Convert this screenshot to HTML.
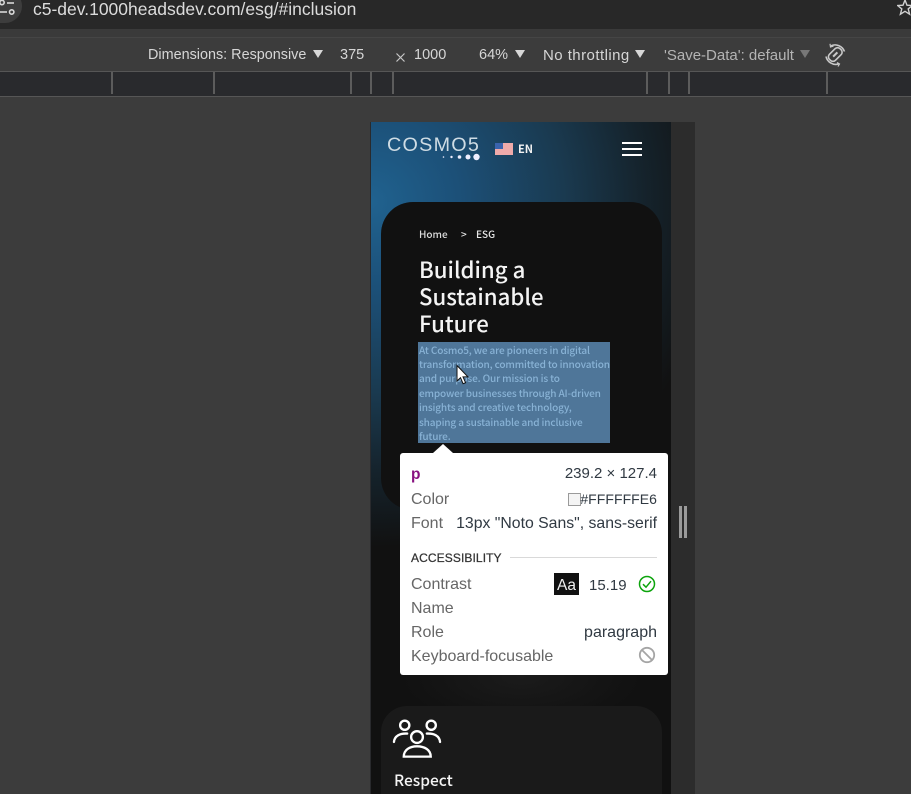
<!DOCTYPE html>
<html><head><meta charset="utf-8"><style>
html,body{margin:0;padding:0;background:#3c3c3c}
#r{position:relative;width:911px;height:794px;overflow:hidden;background:#3c3c3c;font-family:"Liberation Sans",sans-serif}
#r div,#r span.a,#r svg{position:absolute}
.t{white-space:nowrap;line-height:1}
.dt{color:#d6d6d6;font-size:15px;top:47px}
.tri{width:0;height:0;border-left:5px solid transparent;border-right:5px solid transparent;border-top:8px solid #d8d8d8;top:50px}
.tk{width:2px;height:22px;top:72px;background:#5c5c5c}
.n{font-family:"Noto Sans CJK SC","Liberation Sans",sans-serif}
.lb{color:#666;font-size:16px}
.val{color:#303942;font-size:15px}
</style></head><body><div id="r">
<div style="left:0;top:0;width:911px;height:29px;background:#282828"></div>
<div style="left:0;top:29px;width:911px;height:8px;background:#3a3a3a"></div>
<div style="left:0;top:37px;width:911px;height:1px;background:#454545"></div>
<div style="left:-22px;top:-11px;width:44px;height:34px;border-radius:17px;background:#3d3d3d"></div>
<svg style="left:0;top:0" width="16" height="16" viewBox="0 0 16 16" fill="none" stroke="#d8d8d8" stroke-width="1.6"><circle cx="2" cy="2.500" r="2.200"/><path d="M7 3H14"/><path d="M0 12H7"/><circle cx="11.700" cy="12" r="2.200"/></svg>
<div class="t" style="left:33px;top:0;color:#dcdcdc;font-size:17.500px;line-height:18px">c5-dev.1000headsdev.com/esg/#inclusion</div>
<svg style="left:897px;top:-2px" width="16" height="18" viewBox="0 0 16 18" fill="none" stroke="#d0d0d0" stroke-width="1.400"><path d="M8 2l2 5.200 5.400.3-4.200 3.400 1.400 5.300L8 13.300l-4.600 2.900 1.400-5.300L.6 7.500 6 7.200z"/></svg>

<div class="t dt" style="left:148px;font-size:14.400px;top:48px">Dimensions: Responsive</div><div class="tri" style="left:313px"></div>
<div class="t dt" style="left:340px;top:48px;font-size:14.500px">375</div>
<svg style="left:396px;top:53px" width="9" height="9" viewBox="0 0 9 9" stroke="#c8c8c8" stroke-width="1.200"><path d="M.5.500l8 8M8.500.500l-8 8"/></svg>
<div class="t dt" style="left:414px;top:48px;font-size:14.500px">1000</div>
<div class="t dt" style="left:479px;top:48px;font-size:14.500px">64%</div><div class="tri" style="left:515px"></div>
<div class="t dt" style="left:543px;top:48px;letter-spacing:.45px">No throttling</div><div class="tri" style="left:635px"></div>
<div class="t dt" style="left:664px;top:48px;color:#b4b4b4">'Save-Data': default</div><div class="tri" style="left:800px;border-top-color:#777"></div>
<svg style="left:823px;top:42px" width="25" height="25" viewBox="0 0 25 25" fill="none" stroke="#c8c8c8" stroke-width="1.600"><rect x="8" y="5" width="8.500" height="15" rx="3.500" transform="rotate(45 12.250 12.500)"/><path d="M12.250 9.500v6" transform="rotate(45 12.250 12.500)" stroke-width="2"/><path d="M8 3.800A10 10 0 0 1 21.500 9.500"/><path d="M3 14.500A10 10 0 0 0 15.500 22"/><path d="M7 1.800L7.500 5 10.500 4" stroke-width="1.200"/><path d="M14 20.500l2.500 1.500-1.500 2.500" stroke-width="1.200"/></svg>

<div style="left:0;top:71px;width:911px;height:1px;background:#565656"></div>
<div style="left:0;top:72px;width:911px;height:24px;background:#292a2d"></div>
<div style="left:0;top:96px;width:911px;height:1px;background:#565656"></div>
<div class="tk" style="left:111px"></div><div class="tk" style="left:213px"></div><div class="tk" style="left:350px"></div><div class="tk" style="left:370px"></div><div class="tk" style="left:392px"></div><div class="tk" style="left:646px"></div><div class="tk" style="left:668px"></div><div class="tk" style="left:688px"></div><div class="tk" style="left:826px"></div>

<div style="left:370px;top:122px;width:325px;height:672px;background:#292a2d"></div>
<div style="left:671px;top:122px;width:24px;height:672px;background:#2c2c2c"></div>
<div style="left:371px;top:122px;width:300px;height:672px;background:#111;overflow:hidden">
 <div style="left:0;top:0;width:300px;height:672px;background:radial-gradient(ellipse 350px 345px at 0px 80px,#20628f 0%,#1c5078 25%,#1a3a50 55%,#15232c 78%,#111 100%)"></div>
 <div style="left:0;top:460px;width:300px;height:212px;background:radial-gradient(ellipse 120px 50px at 150px 95px,#1b1b1b,rgba(17,17,17,0) 100%)"></div>
 <div style="left:10px;top:80px;width:281px;height:308px;background:#111;border-radius:32px"></div>
 <div style="left:10px;top:584px;width:281px;height:120px;background:#1a1a1a;border-radius:26px"></div>
</div>

<div class="t" style="left:387px;top:136px;color:#cfdce4;font-size:19px;line-height:20px;letter-spacing:1.200px;transform:scaleX(1.04);transform-origin:0 0">COSMO5</div>
<svg style="left:439px;top:152px" width="42" height="10" viewBox="0 0 42 10" fill="#eef"><circle cx="4.500" cy="5" r=".8"/><circle cx="12.500" cy="5" r="1.200"/><circle cx="20.500" cy="5" r="1.800"/><circle cx="29" cy="5" r="2.500"/><circle cx="37.500" cy="5" r="3.200"/></svg>

<svg style="left:495px;top:143px" width="18" height="12" viewBox="0 0 18 12"><rect width="18" height="12" fill="#f6dada"/><path d="M0 1h18M0 3h18M0 5h18M0 7h18M0 9h18M0 11h18" stroke="#e87a7a" stroke-width="1"/><rect width="8" height="6" fill="#3a63ad"/></svg>
<div class="t n" style="left:518px;top:143px;color:#f2f2f2;font-size:11px;font-weight:700;line-height:12px">EN</div>
<div style="left:622px;top:142px;width:20px;height:2px;background:#fff"></div>
<div style="left:622px;top:148px;width:20px;height:2px;background:#fff"></div>
<div style="left:622px;top:154px;width:20px;height:2px;background:#fff"></div>

<div class="t n" style="left:419px;top:228px;color:#dcdcdc;font-size:10px;line-height:12px;font-weight:500">Home</div>
<div class="t n" style="left:461px;top:228px;color:#e8e8e8;font-size:10px;line-height:12px;font-weight:500">&gt;</div>
<div class="t n" style="left:476px;top:228px;color:#e8e8e8;font-size:10px;line-height:12px;font-weight:500">ESG</div>
<div class="t n" style="left:419px;top:256px;color:#f4f4f4;font-size:22.200px;line-height:27px;font-weight:500">Building a<br>Sustainable<br>Future</div>

<div style="left:418px;top:342px;width:192px;height:101px;background:#4f7699"></div>
<div class="t n" style="left:419px;top:342.500px;color:#88b2d5;font-size:10.050px;line-height:14.450px;font-weight:500;letter-spacing:-.15px">At Cosmo5, we are pioneers in digital<br>transformation, committed to innovation<br>and purpose. Our mission is to<br>empower businesses through AI-driven<br>insights and creative technology,<br>shaping a sustainable and inclusive<br>future.</div>
<svg style="left:455px;top:364px" width="14" height="22" viewBox="0 0 14 22"><path d="M2 1.500V17l3.500-3.300 2.600 6 2.500-1-2.600-5.800H13z" fill="#fff" stroke="#111" stroke-width="1"/></svg>

<div style="left:400px;top:453px;width:268px;height:222px;background:#fff;border-radius:3px"></div>
<div style="left:433px;top:444px;width:0;height:0;border-left:10px solid transparent;border-right:10px solid transparent;border-bottom:9px solid #fff"></div>
<div class="t" style="left:411px;top:467px;color:#881280;font-size:15.500px;font-weight:700">p</div>
<div class="t val" style="right:254px;top:466px">239.2 × 127.4</div>
<div class="t lb" style="left:411px;top:492px">Color</div>
<div style="left:568px;top:493px;width:11px;height:11px;border:1px solid #9a9a9a;background:#f4f4f4"></div>
<div class="t val" style="right:254px;top:492px;font-size:14px;letter-spacing:.05px">#FFFFFFE6</div>
<div class="t lb" style="left:411px;top:516px">Font</div>
<div class="t val" style="right:254px;top:516px;font-size:15.800px">13px "Noto Sans", sans-serif</div>
<div class="t" style="left:411px;top:552px;color:#333;font-size:12px;letter-spacing:.1px;-webkit-text-stroke:.25px #333">ACCESSIBILITY</div>
<div style="left:510px;top:557px;width:147px;height:1px;background:#d9d9d9"></div>
<div class="t lb" style="left:411px;top:577px">Contrast</div>
<div style="left:554px;top:573px;width:25px;height:22px;background:#111"></div>
<div class="t" style="left:557px;top:578px;color:#f0f0f0;font-size:15.500px">Aa</div>
<div class="t val" style="left:589px;top:578px">15.19</div>
<svg style="left:638px;top:575px" width="18" height="18" viewBox="0 0 18 18" fill="none" stroke="#0ca40c" stroke-width="1.500"><circle cx="9" cy="9" r="7.500"/><path d="M5 9.200l3 3 5-6"/></svg>
<div class="t lb" style="left:411px;top:601px">Name</div>
<div class="t lb" style="left:411px;top:625px">Role</div>
<div class="t val" style="right:254px;top:625px;font-size:16px">paragraph</div>
<div class="t lb" style="left:411px;top:649px">Keyboard-focusable</div>
<svg style="left:638px;top:646px" width="18" height="18" viewBox="0 0 18 18" fill="none" stroke="#a5a5a5" stroke-width="1.800"><circle cx="9" cy="9" r="7.200"/><path d="M4 4l10 10"/></svg>

<div style="left:679px;top:506px;width:3px;height:32px;background:#9a9a9a"></div>
<div style="left:684px;top:506px;width:3px;height:32px;background:#9a9a9a"></div>

<svg style="left:392px;top:717px" width="50" height="42" viewBox="0 0 51 42" fill="none" stroke="#fff" stroke-width="2.400" stroke-linecap="round"><circle cx="13" cy="8" r="4.700"/><circle cx="40" cy="8" r="4.700"/><circle cx="25.500" cy="20" r="6"/><path d="M2 25c.5-6 6-9 13.500-8.500"/><path d="M49 25c-.5-6-6-9-13.500-8.500"/><path d="M12 40c0-7 6-10.500 13.500-10.500S39.500 33 39.500 40z"/></svg>
<div class="t n" style="left:394px;top:770px;color:#f4f4f4;font-size:15.500px;line-height:20px;font-weight:500">Respect</div>
</div></body></html>
